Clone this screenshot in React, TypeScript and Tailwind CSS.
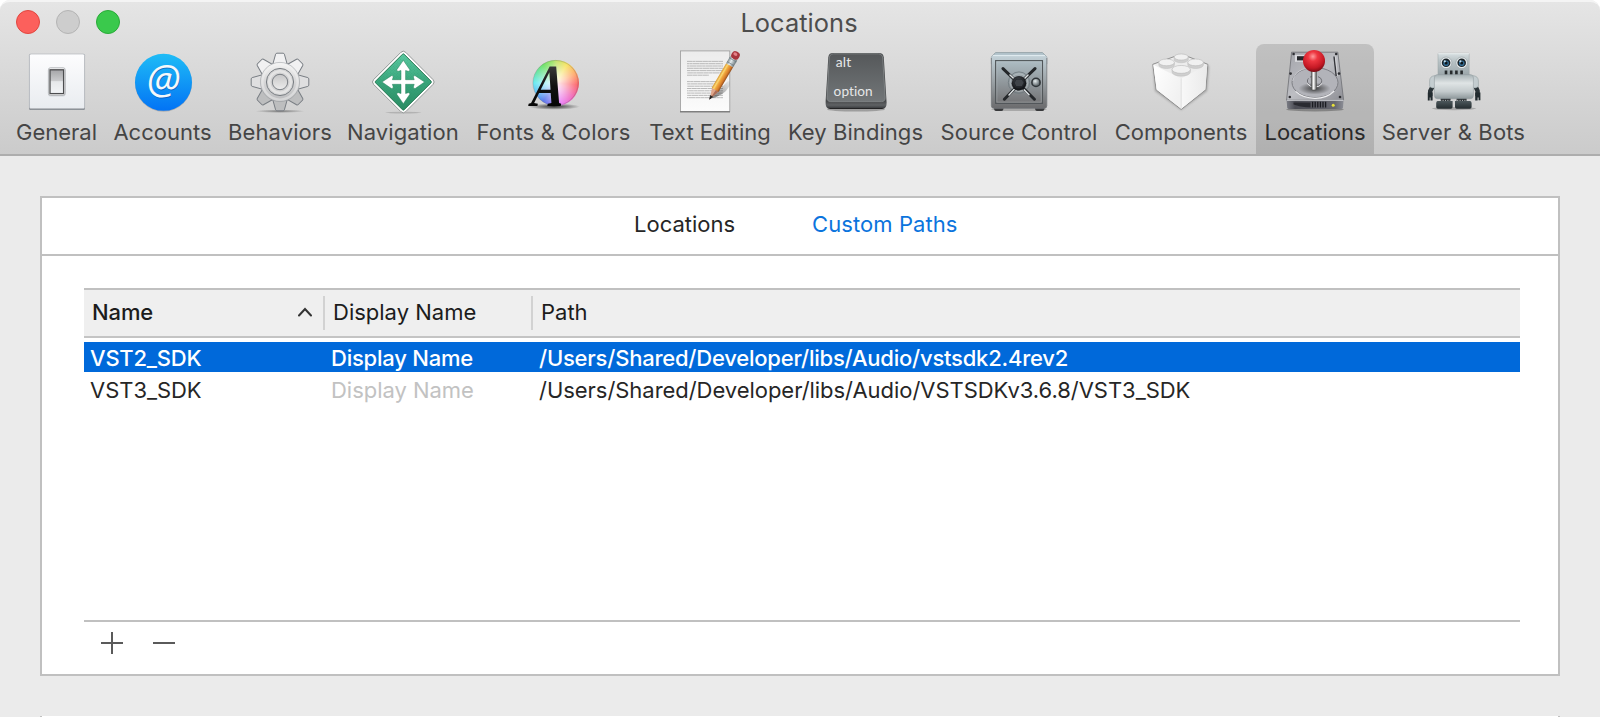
import type { ReactNode } from "react";

function Icon({ children }: { children: ReactNode }) {
  return (
    <svg width="64" height="64" viewBox="0 0 64 64" className="block shrink-0 overflow-visible">
      {children}
    </svg>
  );
}

function GeneralIcon() {
  return (
    <Icon>
      <defs>
        <linearGradient id="gen-plate" x1="0" y1="0" x2="0" y2="1">
          <stop offset="0" stopColor="#fdfdfe" />
          <stop offset="1" stopColor="#e9ecf0" />
        </linearGradient>
        <linearGradient id="gen-switch" x1="0" y1="0" x2="0" y2="1">
          <stop offset="0" stopColor="#a5a5a8" />
          <stop offset="0.45" stopColor="#c9cacc" />
          <stop offset="0.5" stopColor="#e6e8ea" />
          <stop offset="1" stopColor="#f2f4f6" />
        </linearGradient>
      </defs>
      <rect x="4" y="4" width="56" height="56" rx="1.5" fill="#8b9096" />
      <rect x="4.4" y="4" width="55.2" height="54.6" rx="1.5" fill="url(#gen-plate)" stroke="#b4b8bd" strokeWidth="0.7" />
      <rect x="23.2" y="18.6" width="17.2" height="28" rx="2" fill="#c5c9cf" opacity="0.6" />
      <rect x="23.4" y="17.8" width="16.8" height="27.6" rx="2" fill="#fafafa" stroke="#a5a8ac" strokeWidth="0.8" />
      <rect x="25" y="19.8" width="13.6" height="23.8" fill="url(#gen-switch)" stroke="#4c4d4f" strokeWidth="1.3" />
    </Icon>
  );
}

function AccountsIcon() {
  return (
    <Icon>
      <defs>
        <linearGradient id="acc-disc" x1="0" y1="0" x2="0" y2="1">
          <stop offset="0" stopColor="#1fbcf6" />
          <stop offset="1" stopColor="#0273f5" />
        </linearGradient>
      </defs>
      <circle cx="32.5" cy="33.2" r="28.5" fill="#000" opacity="0.18" />
      <circle cx="32.5" cy="32.3" r="28.5" fill="url(#acc-disc)" />
      <text x="33" y="44.8" textAnchor="middle" fontFamily="Open Sans, Noto Sans, sans-serif" fontStyle="italic" fontSize="39.5" fill="#0a4da8" opacity="0.6">@</text>
      <text x="32.6" y="43.8" textAnchor="middle" fontFamily="Open Sans, Noto Sans, sans-serif" fontStyle="italic" fontSize="39.5" fill="#f6f8fa">@</text>
    </Icon>
  );
}

const toothAngles = [0, 45, 90, 135, 180, 225, 270, 315];

function BehaviorsIcon() {
  return (
    <Icon>
      <defs>
        <linearGradient id="gear-fill" x1="0" y1="12" x2="0" y2="52" gradientUnits="userSpaceOnUse">
          <stop offset="0" stopColor="#f4f4f4" />
          <stop offset="0.5" stopColor="#d6d6d7" />
          <stop offset="1" stopColor="#b9babc" />
        </linearGradient>
        <linearGradient id="gear-hub" x1="0" y1="0" x2="0" y2="1">
          <stop offset="0" stopColor="#c6c6c7" />
          <stop offset="1" stopColor="#ececec" />
        </linearGradient>
        <radialGradient id="gear-shadow">
          <stop offset="0" stopColor="#555" stopOpacity="0.7" />
          <stop offset="1" stopColor="#555" stopOpacity="0" />
        </radialGradient>
      </defs>
      <ellipse cx="32" cy="61.2" rx="25" ry="1.8" fill="url(#gear-shadow)" />
      {toothAngles.map((a) => (
        <path key={a} d="M24.6 15 L27.6 4.2 Q28 3.2 29 3.2 L35 3.2 Q36 3.2 36.4 4.2 L39.4 15 Z" transform={`rotate(${a} 32 32)`} fill={a > 100 && a < 260 ? "#bdbebf" : a === 90 || a === 270 ? "#dfdfe0" : "#f1f1f2"} stroke="#787d83" strokeWidth="1" />
      ))}
      <circle cx="32" cy="32" r="19.6" fill="url(#gear-fill)" stroke="#92979b" strokeWidth="0.5" />
      <circle cx="32" cy="32" r="17.6" fill="none" stroke="#f3f3f3" strokeOpacity="0.45" strokeWidth="2.4" />
      <circle cx="32" cy="32" r="13.6" fill="#d2d2d3" stroke="#7a7f84" strokeWidth="1" />
      <circle cx="32" cy="32" r="10.8" fill="none" stroke="#e4e4e4" strokeWidth="2.4" />
      <circle cx="32" cy="32" r="7.7" fill="url(#gear-hub)" stroke="#7a7f84" strokeWidth="1" />
    </Icon>
  );
}

function NavigationIcon() {
  return (
    <Icon>
      <defs>
        <linearGradient id="nav-green" x1="0" y1="0" x2="1" y2="1">
          <stop offset="0" stopColor="#5ccba3" />
          <stop offset="0.5" stopColor="#3aa67c" />
          <stop offset="1" stopColor="#2a8b63" />
        </linearGradient>
        <pattern id="nav-dots" width="2" height="2" patternUnits="userSpaceOnUse">
          <rect width="1" height="1" fill="#1f8a60" opacity="0.25" />
        </pattern>
      </defs>
      <ellipse cx="32.3" cy="62.6" rx="18" ry="0.9" fill="#777" opacity="0.35" />
      <g transform="translate(-0.2 -0.5)">
        <rect x="9.8" y="9.8" width="45.4" height="45.4" rx="3.5" transform="rotate(45 32.5 32.5)" fill="#fff" stroke="#8f9392" strokeWidth="0.9" />
        <rect x="12.3" y="12.3" width="40.4" height="40.4" rx="1.2" transform="rotate(45 32.5 32.5)" fill="url(#nav-green)" stroke="#24744f" strokeWidth="0.9" />
        <rect x="12.3" y="12.3" width="40.4" height="40.4" rx="1.2" transform="rotate(45 32.5 32.5)" fill="url(#nav-dots)" />
        <path
          d="M32.5 10.8 L39 20.2 Q39.4 22.2 37.4 21.8 L34.8 21 V30.2 H43.4 L42.6 27.6 Q42.4 25.6 44.4 26.2 L53.8 32.5 L44.4 39 Q42.4 39.4 42.6 37.4 L43.4 34.8 H34.8 V44 L37.4 43.2 Q39.4 42.8 39 44.8 L32.5 54.2 L26 44.8 Q25.6 42.8 27.6 43.2 L30.2 44 V34.8 H21.6 L22.4 37.4 Q22.6 39.4 20.6 39 L11.2 32.5 L20.6 26.2 Q22.6 25.6 22.4 27.6 L21.6 30.2 H30.2 V21 L27.6 21.8 Q25.6 22.2 26 20.2 Z"
          fill="#fff"
          stroke="#25805a"
          strokeWidth="0.5"
        />
      </g>
    </Icon>
  );
}

function FontsIcon() {
  return (
    <Icon>
      <defs>
        <radialGradient id="font-white">
          <stop offset="0" stopColor="#fff" stopOpacity="0.95" />
          <stop offset="0.45" stopColor="#fff" stopOpacity="0.6" />
          <stop offset="1" stopColor="#fff" stopOpacity="0.1" />
        </radialGradient>
        <radialGradient id="font-shadow">
          <stop offset="0" stopColor="#000" stopOpacity="0.75" />
          <stop offset="1" stopColor="#000" stopOpacity="0" />
        </radialGradient>
        <linearGradient id="font-a" x1="0" y1="0" x2="0" y2="1">
          <stop offset="0" stopColor="#555" />
          <stop offset="0.5" stopColor="#111" />
          <stop offset="1" stopColor="#000" />
        </linearGradient>
      </defs>
      <ellipse cx="32" cy="56.6" rx="26" ry="3.2" fill="url(#font-shadow)" />
      <foreignObject x="10.5" y="10" width="46" height="46">
        <div className="h-[46px] w-[46px] rounded-full bg-[conic-gradient(from_0deg,#b7e05a,#f5e04c_30deg,#ff9a55_65deg,#fb5058_95deg,#ee55b0_130deg,#e86cf2_165deg,#8a6bf0_190deg,#3f62e8_215deg,#45b4f5_245deg,#4fe6ee_270deg,#4ee0a0_295deg,#56dc50_325deg,#8fe052_350deg,#b7e05a)]" />
      </foreignObject>
      <circle cx="33.5" cy="33" r="23" fill="url(#font-white)" />
      <circle cx="33.5" cy="33" r="22.6" fill="none" stroke="#666" strokeOpacity="0.35" strokeWidth="0.8" />
      <text transform="translate(5.8 56) skewX(-12) scale(0.77 1)" fontFamily="Liberation Serif, serif" fontWeight="700" fontSize="60" fill="url(#font-a)">A</text>
    </Icon>
  );
}

const textLines = [11.4, 13.7, 16, 18.3, 20.6, 22.9, 31.6, 33.9, 36.2, 38.5, 40.8, 43.1, 45.4, 47.7];

function TextEditingIcon() {
  return (
    <Icon>
      <defs>
        <linearGradient id="paper" x1="0" y1="0" x2="0" y2="1">
          <stop offset="0" stopColor="#ececec" />
          <stop offset="1" stopColor="#fcfcfc" />
        </linearGradient>
        <linearGradient id="pencil" x1="0" y1="0" x2="1" y2="0">
          <stop offset="0" stopColor="#d9962e" />
          <stop offset="0.25" stopColor="#fbd873" />
          <stop offset="0.45" stopColor="#f0a83e" />
          <stop offset="0.75" stopColor="#d97e2c" />
          <stop offset="1" stopColor="#8e4a1c" />
        </linearGradient>
        <linearGradient id="ferrule" x1="0" y1="0" x2="1" y2="0">
          <stop offset="0" stopColor="#7d8a8e" />
          <stop offset="0.4" stopColor="#e4ecee" />
          <stop offset="1" stopColor="#6d787c" />
        </linearGradient>
        <linearGradient id="pencil-shadow" x1="0" y1="1" x2="1" y2="0">
          <stop offset="0" stopColor="#333" stopOpacity="0.65" />
          <stop offset="1" stopColor="#333" stopOpacity="0.05" />
        </linearGradient>
      </defs>
      <rect x="2" y="61" width="50" height="1.8" fill="#555" opacity="0.35" />
      <rect x="2.4" y="0.9" width="49.4" height="60.6" fill="url(#paper)" stroke="#9a9a9a" strokeWidth="0.8" />
      <path d="M2 61.6 H52" stroke="#777" strokeWidth="0.9" />
      {textLines.map((y, i) => (
        <path key={y} d={`M9 ${y} H${i === 6 ? 41 : 45}`} stroke="#b2b2b2" strokeWidth="0.9" strokeDasharray="5 0.3 3 0.3 7 0.3" strokeDashoffset={i * 3} />
      ))}
      <path d="M9 25.2 H31" stroke="#b2b2b2" strokeWidth="0.9" strokeDasharray="5 0.3" />
      <path d="M32.5 48.5 L50 31 Q53 31 51.5 36 Q46 46 32.5 48.5 Z" fill="url(#pencil-shadow)" />
      <g transform="translate(31.6 49.3) rotate(30.5)">
        <path d="M0 0 L-4 -12 L4 -12 Z" fill="#dfa68b" />
        <path d="M0 0 L0.8 -12 L4 -12 Z" fill="#a96d58" />
        <path d="M0 0 L-1.2 -3.6 L1.2 -3.6 Z" fill="#1d1d1d" stroke="#1d1d1d" strokeWidth="0.6" />
        <rect x="-4" y="-39.5" width="8" height="28.5" fill="url(#pencil)" />
        <rect x="-4.1" y="-47.5" width="8.2" height="8" fill="url(#ferrule)" />
        <path d="M-4 -41.4 H4 M-4 -45.8 H4" stroke="#66757b" strokeWidth="0.6" />
        <rect x="-4.1" y="-55" width="8.2" height="8" rx="3.4" fill="#a8353d" />
        <ellipse cx="-0.7" cy="-52" rx="2.1" ry="1.6" fill="#e58289" />
      </g>
    </Icon>
  );
}

function KeyBindingsIcon() {
  return (
    <Icon>
      <defs>
        <linearGradient id="key-face" x1="0" y1="0" x2="0" y2="1">
          <stop offset="0" stopColor="#55585a" />
          <stop offset="1" stopColor="#727678" />
        </linearGradient>
        <linearGradient id="key-base" x1="0" y1="51" x2="0" y2="59" gradientUnits="userSpaceOnUse">
          <stop offset="0" stopColor="#46484a" />
          <stop offset="0.5" stopColor="#5f6264" />
          <stop offset="0.8" stopColor="#45474a" />
          <stop offset="1" stopColor="#141414" />
        </linearGradient>
      </defs>
      <ellipse cx="32" cy="59.6" rx="29" ry="2" fill="#000" opacity="0.25" />
      <path d="M8.9 3 H54.9 Q59.4 3 59.8 7.4 L62.6 52 Q63 59 58.1 59 H6.1 Q1.2 59 1.6 52 L4.3 7.4 Q4.6 3 8.9 3 Z" fill="url(#key-base)" />
      <path d="M9.6 3.8 H54.2 Q58.4 3.8 58.7 8 L61.2 47.5 Q61.4 51.6 57.4 51.6 H6.8 Q2.8 51.6 3 47.5 L5.3 8 Q5.6 3.8 9.6 3.8 Z" fill="url(#key-face)" stroke="#8c9092" strokeWidth="0.7" />
      <text x="11.8" y="17" textLength="15.4" lengthAdjust="spacingAndGlyphs" fontFamily="Lato, sans-serif" fontSize="12.4" fill="#e6e7e8">alt</text>
      <text x="9.6" y="46.4" textLength="39.2" lengthAdjust="spacingAndGlyphs" fontFamily="Lato, sans-serif" fontSize="12.6" fill="#e6e7e8">option</text>
    </Icon>
  );
}

function SourceControlIcon() {
  return (
    <Icon>
      <defs>
        <linearGradient id="safe-body" x1="0" y1="0" x2="0" y2="1">
          <stop offset="0" stopColor="#c3d2d9" />
          <stop offset="0.5" stopColor="#9aa1a5" />
          <stop offset="1" stopColor="#6b6b6d" />
        </linearGradient>
        <linearGradient id="safe-door" x1="0" y1="0" x2="0" y2="1">
          <stop offset="0" stopColor="#aebdc4" />
          <stop offset="1" stopColor="#747476" />
        </linearGradient>
        <radialGradient id="safe-hub" cx="0.45" cy="0.4">
          <stop offset="0" stopColor="#565a60" />
          <stop offset="1" stopColor="#15171a" />
        </radialGradient>
        <radialGradient id="safe-knob" cx="0.4" cy="0.35">
          <stop offset="0" stopColor="#e6ecee" />
          <stop offset="1" stopColor="#70787c" />
        </radialGradient>
      </defs>
      <ellipse cx="32" cy="59.5" rx="28" ry="1.6" fill="#000" opacity="0.2" />
      <path d="M6.5 57 H17 L16 60.2 Q15.5 61 14.5 61 H9 Q8 61 7.5 60.2 Z M47.5 57 H58 L57 60.2 Q56.5 61 55.5 61 H50 Q49 61 48.5 60.2 Z" fill="#38393b" />
      <path d="M4.4 7 L8.5 2.6 H55.5 L59.8 7 V14 H4.4 Z" fill="#b4c5cd" stroke="#84939a" strokeWidth="0.7" />
      <path d="M4.4 8 Q4.4 5.4 7 5.4 H57.2 Q59.8 5.4 59.8 8 V55.7 Q59.8 58.3 57.2 58.3 H7 Q4.4 58.3 4.4 55.7 Z" fill="url(#safe-body)" />
      <path d="M4.4 8 V55.7 Q4.4 58.3 7 58.3 H57.2 Q59.8 58.3 59.8 55.7 V8" fill="none" stroke="#75797c" strokeWidth="0.8" />
      <path d="M6 5.6 H58" stroke="#e3eef2" strokeWidth="1" />
      <rect x="8.6" y="10.6" width="46.9" height="42.8" fill="url(#safe-door)" stroke="#515659" strokeWidth="1.1" />
      <rect x="9.9" y="11.9" width="44.3" height="40.2" fill="none" stroke="#c7d0d3" strokeOpacity="0.45" strokeWidth="0.7" />
      <circle cx="32" cy="32.6" r="10.7" fill="none" stroke="#6d787d" strokeWidth="0.8" />
      <circle cx="32" cy="32.6" r="8.8" fill="none" stroke="#b8c1c4" strokeWidth="0.7" />
      <g strokeLinecap="round">
        <path d="M16 18.6 L32 34 L48 18.6 M17.4 49.2 L32 34 L47.4 49.2" fill="none" stroke="#24272a" strokeWidth="3" />
        <path d="M23 25 L26.5 28.3 M41 25 L37.8 28.2 M22 45 L27 39.6 M42 44.8 L37.4 39.9" stroke="#dde2e4" strokeWidth="1.5" />
      </g>
      <circle cx="32" cy="33.2" r="7.3" fill="url(#safe-hub)" />
      <path d="M29 29.2 H35 L37 32.8 L35 36.5 H29 L27.2 32.8 Z" fill="#3f4348" stroke="#22252a" strokeWidth="0.8" />
      <circle cx="49" cy="32.4" r="4.1" fill="url(#safe-knob)" stroke="#303539" strokeWidth="1.6" />
    </Icon>
  );
}

function Stud({ cx, cy, rx }: { cx: number; cy: number; rx: number }) {
  return (
    <g>
      <path d={`M${cx - rx} ${cy - 1} V${cy + 1.6} A${rx} ${rx * 0.45} 0 0 0 ${cx + rx} ${cy + 1.6} V${cy - 1} Z`} fill="#cfcfcf" stroke="#bdbdbd" strokeWidth="0.5" />
      <ellipse cx={cx} cy={cy - 1} rx={rx} ry={rx * 0.43} fill="#f1f1f1" stroke="#b9b9b9" strokeWidth="0.6" />
    </g>
  );
}

function ComponentsIcon() {
  return (
    <Icon>
      <defs>
        <linearGradient id="brick-left" x1="0" y1="0" x2="1" y2="0.6">
          <stop offset="0" stopColor="#ffffff" />
          <stop offset="1" stopColor="#f1f1f1" />
        </linearGradient>
        <linearGradient id="brick-right" x1="0" y1="0" x2="1" y2="0">
          <stop offset="0" stopColor="#f8f8f8" />
          <stop offset="1" stopColor="#eaeaea" />
        </linearGradient>
        <filter id="brick-shadow" x="-20%" y="-20%" width="140%" height="140%">
          <feGaussianBlur stdDeviation="1.3" />
        </filter>
      </defs>
      <path d="M4 16 L32 6 L60 16 L58 41 L32.2 60 L6 41 Z" fill="#555" opacity="0.4" filter="url(#brick-shadow)" />
      <path d="M3.8 14.3 L28 5.6 Q32.2 4.4 36.4 5.6 L58.8 14.3 L56.8 39.6 L32.2 59.4 L7.2 39.9 Z" fill="#ededed" stroke="#858585" strokeWidth="0.9" strokeLinejoin="round" />
      <path d="M4.3 14.8 L32.2 28.4 V58.8 L7.6 39.6 Z" fill="url(#brick-left)" />
      <path d="M58.3 14.8 L32.2 28.4 V58.8 L56.4 39.4 Z" fill="url(#brick-right)" />
      <path d="M32.2 28.4 V58.4" stroke="#dcdcdc" strokeWidth="0.8" />
      <Stud cx={32.2} cy={8} rx={7.1} />
      <Stud cx={17.6} cy={13.4} rx={7.8} />
      <Stud cx={46.6} cy={13.4} rx={7.8} />
      <Stud cx={32.2} cy={20.4} rx={9.2} />
    </Icon>
  );
}

function LocationsIcon() {
  return (
    <Icon>
      <defs>
        <linearGradient id="disk-top" x1="0" y1="0" x2="1" y2="1">
          <stop offset="0" stopColor="#a3a4aa" />
          <stop offset="0.5" stopColor="#bdbec3" />
          <stop offset="1" stopColor="#8f9096" />
        </linearGradient>
        <linearGradient id="disk-front" x1="0" y1="0" x2="1" y2="0">
          <stop offset="0" stopColor="#7b7d85" />
          <stop offset="0.15" stopColor="#4b4c54" />
          <stop offset="0.85" stopColor="#676870" />
          <stop offset="1" stopColor="#8c8e96" />
        </linearGradient>
        <linearGradient id="stick" x1="0" y1="0" x2="1" y2="0">
          <stop offset="0" stopColor="#6b6b6b" />
          <stop offset="0.45" stopColor="#ffffff" />
          <stop offset="1" stopColor="#5c5c5c" />
        </linearGradient>
        <radialGradient id="ball" cx="0.45" cy="0.3" r="0.7">
          <stop offset="0" stopColor="#ff9a9c" />
          <stop offset="0.3" stopColor="#ee3741" />
          <stop offset="0.75" stopColor="#c41824" />
          <stop offset="1" stopColor="#7c0d16" />
        </radialGradient>
        <radialGradient id="stick-shadow">
          <stop offset="0" stopColor="#222" stopOpacity="0.8" />
          <stop offset="1" stopColor="#222" stopOpacity="0" />
        </radialGradient>
      </defs>
      <ellipse cx="32" cy="59.6" rx="29" ry="1.8" fill="#000" opacity="0.28" />
      <path d="M8.6 2.2 H54.8 L60.6 50 H3.6 Z" fill="url(#disk-top)" stroke="#6d6e74" strokeWidth="0.8" />
      <path d="M3.6 50 H60.6 L60 57.4 Q59.8 59 58.2 59 H6 Q4.4 59 4.2 57.4 Z" fill="url(#disk-front)" />
      <path d="M4 50.2 H60.4" stroke="#d6d7db" strokeWidth="1.1" />
      <ellipse cx="32" cy="32.6" rx="23" ry="15" fill="#b2b3b9" stroke="#77787e" strokeWidth="0.9" />
      <path d="M12.6 41.4 Q20 48.3 32 48.3 Q44 48.3 51.2 41" fill="none" stroke="#efeff1" strokeWidth="1.2" />
      <path d="M9.6 31 Q11.5 19.5 26 18" fill="none" stroke="#d9dade" strokeWidth="0.7" />
      <ellipse cx="31.5" cy="38.5" rx="16" ry="6" fill="url(#stick-shadow)" />
      <ellipse cx="31.6" cy="31" rx="7.2" ry="5" fill="none" stroke="#66676c" strokeWidth="0.9" strokeDasharray="6 2" />
      <path d="M24.2 33.5 Q27 37.2 31.6 37.2 Q36.5 37.2 39 33.5" fill="none" stroke="#e8e8ea" strokeWidth="1" />
      <rect x="12" y="4.8" width="11" height="7" fill="#d9dade" />
      <rect x="14" y="6.2" width="8" height="4.2" fill="#26272b" />
      <path d="M51 6.5 L53.2 26" stroke="#333439" strokeWidth="1.4" />
      <path d="M52.4 6.5 L54.6 26" stroke="#dcdce0" strokeWidth="0.7" />
      {[[10.6, 4], [53.2, 4], [7.6, 23.6], [56, 23.6], [6.8, 47], [57, 47]].map(([x, y]) => (
        <circle key={`${x}-${y}`} cx={x} cy={y} r="1.3" fill="#2d2e32" />
      ))}
      <path d="M10.5 52.6 H27.5 V57.4 Q18 57.4 14 55.6 L10.5 54.4 Z" fill="#2a2b31" />
      <path d="M29.6 51.8 V57.6 M32.2 51.8 V57.6 M34.8 51.8 V57.6 M37.4 51.8 V57.6 M40 51.8 V57.6 M42.6 51.8 V57.6" stroke="#1b1c21" strokeWidth="1.3" />
      <circle cx="50.2" cy="55.3" r="1.5" fill="#e7e13a" />
      <rect x="28.4" y="20" width="5" height="20" rx="1.2" fill="url(#stick)" stroke="#4b4b4b" strokeWidth="0.6" />
      <circle cx="31" cy="10.9" r="11" fill="url(#ball)" />
    </Icon>
  );
}

function ServerIcon() {
  return (
    <Icon>
      <defs>
        <linearGradient id="bot-head" x1="0" y1="0" x2="0" y2="1">
          <stop offset="0" stopColor="#d8e0e2" />
          <stop offset="0.3" stopColor="#bcc6c9" />
          <stop offset="1" stopColor="#98a4a8" />
        </linearGradient>
        <linearGradient id="bot-body" x1="0" y1="0" x2="0" y2="1">
          <stop offset="0" stopColor="#a7b2b5" />
          <stop offset="0.35" stopColor="#dfe4e5" />
          <stop offset="0.7" stopColor="#c3cacc" />
          <stop offset="1" stopColor="#8d979a" />
        </linearGradient>
        <linearGradient id="bot-foot" x1="0" y1="0" x2="0" y2="1">
          <stop offset="0" stopColor="#4c575b" />
          <stop offset="1" stopColor="#232b2e" />
        </linearGradient>
      </defs>
      <ellipse cx="32" cy="58.6" rx="22" ry="1.6" fill="#000" opacity="0.2" />
      <g transform="translate(-0.4 0)">
        <rect x="16.4" y="3.2" width="31.2" height="23" rx="0.8" fill="url(#bot-head)" stroke="#9aa4a7" strokeWidth="0.5" />
        <path d="M16.6 3.7 H47.4" stroke="#eef2f3" strokeWidth="0.9" />
        {[24.5, 40.1].map((x) => (
          <g key={x}>
            <circle cx={x} cy="12.8" r="5.8" fill="#e7ecee" stroke="#929c9f" strokeWidth="0.6" />
            <circle cx={x} cy="12.8" r="4.3" fill="#1b2429" />
            <circle cx={x} cy="13.2" r="2.8" fill="#326a91" />
            <circle cx={x} cy="13" r="1.5" fill="#0c1418" />
            <circle cx={x - 1.3} cy="11.3" r="1.1" fill="#c3e2f3" />
          </g>
        ))}
        <path d="M24.4 20.6 V25.5 M29.6 20.6 V25.5 M34.8 20.6 V25.5 M40 20.6 V25.5" stroke="#272c2e" strokeWidth="2.6" />
        <path d="M11 36.5 L8.6 41 V46 M54 36.5 L56 41 V46" fill="none" stroke="#2b3438" strokeWidth="4.4" strokeLinejoin="round" />
        <path d="M6.2 42.5 H11 V50.6 H8.9 V47.4 H8.1 V50.6 H6.2 Z M53.6 42.5 H58.8 V50.2 H57 V47.4 H56 V50.6 H53.6 Z" fill="#222b2f" />
        <path d="M13.5 25.6 Q8 26 8 31 V36.4 Q10.5 39 13.5 37.4 Z M51 25.6 Q56.8 26 56.8 31 V36.4 Q54 39 51 37.4 Z" fill="#c4cdd0" stroke="#8a9699" strokeWidth="0.5" />
        <path d="M19 47 H29 V52 H19 Z M35 47 H45 V52 H35 Z" fill="#212628" />
        <rect x="12.8" y="24.6" width="39" height="24.2" rx="3.2" fill="url(#bot-body)" stroke="#8f999c" strokeWidth="0.5" />
        <path d="M18.5 50.4 H29 M35.5 50.4 H46" stroke="#d5dcde" strokeWidth="0.8" strokeDasharray="1.2 1.2" />
        <path d="M16 51 H31 V57 Q31 58.8 29.2 58.8 H16.4 Q14.6 58.8 14.6 57 V53 Q14.8 51.2 16 51 Z M33.4 51 H48.4 Q49.8 51.2 50 53 V57 Q50 58.8 48.2 58.8 H35.2 Q33.4 58.8 33.4 57 Z" fill="url(#bot-foot)" />
      </g>
    </Icon>
  );
}

const toolbar = [
  { label: "General", width: "w-[97px]", icon: <GeneralIcon /> },
  { label: "Accounts", width: "w-[115px]", icon: <AccountsIcon /> },
  { label: "Behaviors", width: "w-[120px] tracking-[0.1px]", icon: <BehaviorsIcon /> },
  { label: "Navigation", width: "w-[126px] tracking-[0.1px]", icon: <NavigationIcon /> },
  { label: "Fonts & Colors", width: "w-[175px] tracking-[0.2px]", icon: <FontsIcon /> },
  { label: "Text Editing", width: "w-[138px]", icon: <TextEditingIcon /> },
  { label: "Key Bindings", width: "w-[153px] tracking-[0.06px]", icon: <KeyBindingsIcon /> },
  { label: "Source Control", width: "w-[174px] tracking-[0.1px]", icon: <SourceControlIcon /> },
  { label: "Components", width: "w-[150px]", icon: <ComponentsIcon /> },
  { label: "Locations", width: "w-[118px]", icon: <LocationsIcon />, selected: true },
  { label: "Server & Bots", width: "w-[159px] tracking-[0.15px]", icon: <ServerIcon /> },
];

const rows = [
  { name: "VST2_SDK", path: "/Users/Shared/Developer/libs/Audio/vstsdk2.4rev2", selected: true },
  { name: "VST3_SDK", path: "/Users/Shared/Developer/libs/Audio/VSTSDKv3.6.8/VST3_SDK" },
];

function WindowHeader() {
  return (
    <header className="flex h-[156px] shrink-0 flex-col rounded-t-[10px] border-t-2 border-b-2 border-t-[#f4f4f4] border-b-[#adadad] bg-linear-to-b from-[#e5e5e5] to-[#cbcbcb]">
      <div className="grid h-[42px] shrink-0 grid-cols-[1fr_auto_1fr] items-start">
        <div className="flex gap-4 pt-2 pl-4">
          <span className="size-6 rounded-full border border-[#e2463f] bg-[#fc605c]" />
          <span className="size-6 rounded-full border border-[#b4b4b4] bg-[#cdcdcd]" />
          <span className="size-6 rounded-full border border-[#29ab38] bg-[#3ac94c]" />
        </div>
        <h1 className="pt-[6px] pr-0.5 text-[25.4px] leading-[30px] tracking-[0.06px] text-[#4d4d4d]">Locations</h1>
      </div>
      <nav className="flex grow pl-2">
        {toolbar.map((item) => (
          <button
            key={item.label}
            type="button"
            className={`flex shrink-0 flex-col items-center pt-[6px] ${item.width} ${item.selected ? "rounded-t-lg bg-black/13 text-[#2a2a2a]" : "text-[#454545]"}`}
          >
            {item.icon}
            <span className="mt-[5px] text-[22px] leading-[26px] whitespace-nowrap">{item.label}</span>
          </button>
        ))}
      </nav>
    </header>
  );
}

function PathsTable() {
  return (
    <div className="mt-8 mr-[38px] ml-[42px] flex h-[334px] flex-col border-y-2 border-[#c0c0c0]">
      <div className="flex h-12 shrink-0 items-center border-b-2 border-[#c4c4c4] bg-[#efefef] text-[#1c1c1c]">
        <div className="flex w-[239px] items-center justify-between pr-[11px] pb-0.5 pl-2">
          <span className="font-medium tracking-[-0.1px]">Name</span>
          <svg width="14" height="10" viewBox="0 0 14 10" fill="none" stroke="#333" strokeWidth="2" strokeLinecap="round">
            <path d="M1 8.5 L7 2 L13 8.5" />
          </svg>
        </div>
        <div className="flex h-[34px] w-[208px] items-center border-l-2 border-[#d2d2d2] pb-0.5 pl-2">Display Name</div>
        <div className="flex h-[34px] items-center border-l-2 border-[#d2d2d2] pb-0.5 pl-2">Path</div>
      </div>
      <div className="flex flex-col gap-[2px] pt-1">
        {rows.map((row) => (
          <div key={row.name} className={`flex h-[30px] items-center pt-0.5 ${row.selected ? "bg-[#0069da] font-medium tracking-[-0.22px] text-white" : "tracking-[-0.04px] text-[#262626]"}`}>
            <span className="w-[247px] pl-1.5">{row.name}</span>
            <span className={`w-[208px] ${row.selected ? "" : "text-[#c2c2c2]"}`}>Display Name</span>
            <span>{row.path}</span>
          </div>
        ))}
      </div>
    </div>
  );
}

export default function App() {
  return (
    <div className="h-[717px] w-[1600px] overflow-hidden bg-white font-['Inter',sans-serif] text-[22px] leading-[26px]">
      <div className="flex h-full flex-col rounded-t-[10px] bg-[#ebebeb]">
        <WindowHeader />
        <main className="mx-10 mt-10 flex h-[480px] shrink-0 flex-col border-2 border-[#c0c0c0] bg-white">
          <div className="flex h-[58px] shrink-0 gap-[77px] border-b-2 border-[#c0c0c0] pt-[13px] pl-[592px]">
            <span className="w-[101px] whitespace-nowrap text-[#262626]">Locations</span>
            <span className="tracking-[0.08px] whitespace-nowrap text-[#0b74dd]">Custom Paths</span>
          </div>
          <PathsTable />
          <div className="flex gap-[30px] pt-[10px] pl-[59px]">
            <svg width="22" height="22" viewBox="0 0 22 22" className="block" stroke="#5a5a5a" strokeWidth="2">
              <path d="M0 11 H22 M11 0 V22" />
            </svg>
            <svg width="22" height="22" viewBox="0 0 22 22" className="block" stroke="#5a5a5a" strokeWidth="2">
              <path d="M0 11 H22" />
            </svg>
          </div>
        </main>
        <div className="mx-10 mt-10 h-px shrink-0 border-x-2 border-[#c0c0c0] bg-white" />
      </div>
    </div>
  );
}
